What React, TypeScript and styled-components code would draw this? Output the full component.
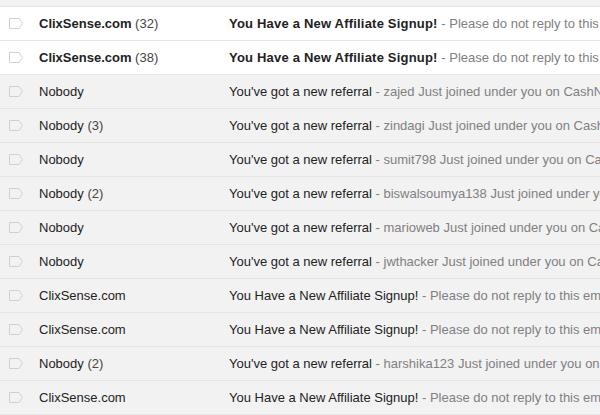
import React from "react";
import styled, { createGlobalStyle } from "styled-components";

const Global = createGlobalStyle`
  html, body { margin: 0; padding: 0; background: #f2f2f2; }
  body { font-family: "Liberation Sans", Arial, sans-serif; font-size: 13px; color: #222; }
`;

const List = styled.div`
  width: 600px;
  overflow: hidden;
  background: #f2f2f2;
`;

const TopStrip = styled.div`
  height: 6px;
  background: #f2f2f2;
  border-bottom: 1px solid #e5e5e5;
`;

const Row = styled.div<{ $unread: boolean }>`
  display: flex;
  align-items: center;
  height: 33px;
  border-bottom: 1px solid #e5e5e5;
  background: ${(p) => (p.$unread ? "#ffffff" : "#f2f2f2")};
  white-space: nowrap;
  font-weight: ${(p) => (p.$unread ? "bold" : "normal")};
`;

const TagCell = styled.div`
  width: 39px;
  flex: 0 0 39px;
  display: flex;
  align-items: center;
  padding-left: 9px;
  box-sizing: border-box;
`;

const Sender = styled.div`
  width: 190px;
  flex: 0 0 190px;
  color: #222;
  overflow: hidden;
`;

const Count = styled.span`
  font-weight: normal;
  color: #444;
`;

const SubjectCell = styled.div`
  flex: 1;
  overflow: hidden;
  color: #222;
`;

const Subject = styled.span<{ $unread: boolean }>`
  letter-spacing: ${(p) => (p.$unread ? "0.2px" : "0")};
`;

const Snippet = styled.span`
  font-weight: normal;
  color: #808080;
`;

const Tag = () => (
  <svg width="15" height="11" viewBox="0 0 15 11">
    <path d="M0.5 0.5 H10 L13.5 5.5 L10 10.5 H0.5 Z" fill="none" stroke="#d0d0d0" strokeWidth="1" />
  </svg>
);

type Mail = { sender: string; count?: number; unread: boolean; subject: string; snippet: string };

const mails: Mail[] = [
  { sender: "ClixSense.com", count: 32, unread: true, subject: "You Have a New Affiliate Signup!", snippet: "Please do not reply to this email" },
  { sender: "ClixSense.com", count: 38, unread: true, subject: "You Have a New Affiliate Signup!", snippet: "Please do not reply to this email" },
  { sender: "Nobody", unread: false, subject: "You've got a new referral", snippet: "zajed Just joined under you on CashNHits" },
  { sender: "Nobody", count: 3, unread: false, subject: "You've got a new referral", snippet: "zindagi Just joined under you on CashNHits" },
  { sender: "Nobody", unread: false, subject: "You've got a new referral", snippet: "sumit798 Just joined under you on CashNHits" },
  { sender: "Nobody", count: 2, unread: false, subject: "You've got a new referral", snippet: "biswalsoumya138 Just joined under you on CashNHits" },
  { sender: "Nobody", unread: false, subject: "You've got a new referral", snippet: "marioweb Just joined under you on CashNHits" },
  { sender: "Nobody", unread: false, subject: "You've got a new referral", snippet: "jwthacker Just joined under you on CashNHits" },
  { sender: "ClixSense.com", unread: false, subject: "You Have a New Affiliate Signup!", snippet: "Please do not reply to this email" },
  { sender: "ClixSense.com", unread: false, subject: "You Have a New Affiliate Signup!", snippet: "Please do not reply to this email" },
  { sender: "Nobody", count: 2, unread: false, subject: "You've got a new referral", snippet: "harshika123 Just joined under you on CashNHits" },
  { sender: "ClixSense.com", unread: false, subject: "You Have a New Affiliate Signup!", snippet: "Please do not reply to this email" },
];

export default function App() {
  return (
    <>
      <Global />
      <List>
        <TopStrip />
        {mails.map((m, i) => (
          <Row key={i} $unread={m.unread}>
            <TagCell>
              <Tag />
            </TagCell>
            <Sender>
              {m.sender}
              {m.count !== undefined && <Count> ({m.count})</Count>}
            </Sender>
            <SubjectCell>
              <Subject $unread={m.unread}>{m.subject}</Subject>
              <Snippet> - {m.snippet}</Snippet>
            </SubjectCell>
          </Row>
        ))}
      </List>
    </>
  );
}
